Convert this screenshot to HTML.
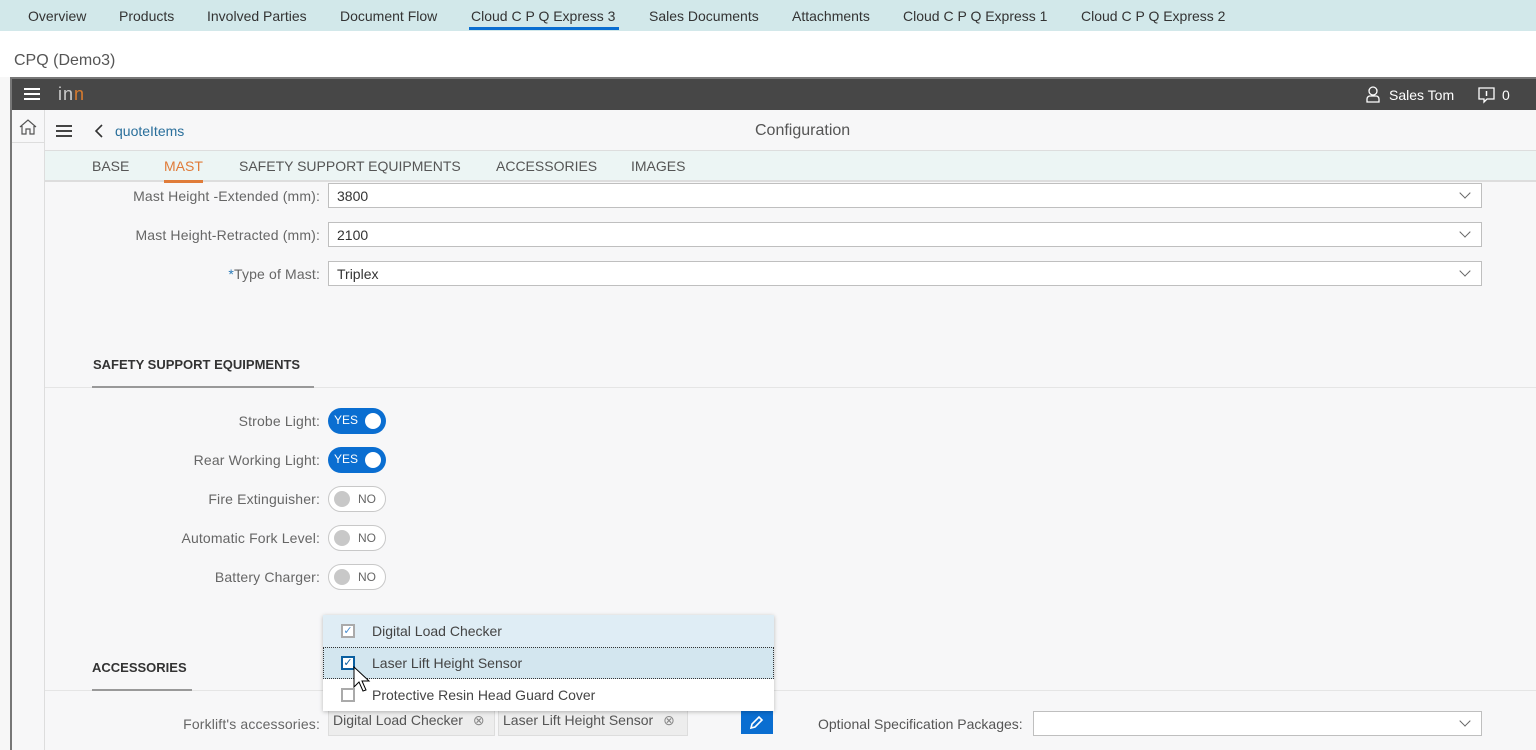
<!DOCTYPE html>
<html><head><meta charset="utf-8"><style>
*{box-sizing:border-box;margin:0;padding:0}
body{width:1536px;height:750px;overflow:hidden;background:#f7f7f7;font-family:"Liberation Sans",Arial,sans-serif;position:relative;color:#333}
.a{position:absolute;white-space:nowrap}
.toptabs{left:0;top:0;width:1536px;height:31px;background:#d2e8ea}
.tt{top:8px;font-size:14px;color:#333}
.lbl{font-size:14px;color:#666;text-align:right;right:1216px;letter-spacing:0.15px}
.inp{left:328px;width:1154px;height:25px;background:#fff;border:1px solid #bfbfbf;font-size:14px;color:#333;padding:4px 8px}
.chev{position:absolute;right:12px;top:5px;width:8px;height:8px;border-right:1px solid #666;border-bottom:1px solid #666;transform:rotate(45deg)}
.yes{left:328px;width:58px;height:26px;border-radius:13px;background:#0a6ed1;color:#fff;font-size:12px;padding:5px 0 0 6px}
.yes::after{content:"";position:absolute;right:5px;top:5px;width:16px;height:16px;border-radius:50%;background:#fff}
.no{left:328px;width:58px;height:26px;border-radius:13px;background:#fff;border:1px solid #c8c8c8;color:#666;font-size:12px;padding:5px 0 0 29px}
.no::before{content:"";position:absolute;left:5px;top:4px;width:16px;height:16px;border-radius:50%;background:#c8c8c8}
.cb{width:14px;height:14px;border:2px solid #aaa;background:#fff;font-size:11px;color:#4a8fd0;line-height:10px;text-align:center}
.tok{top:708px;height:28px;background:#ededed;border:1px solid #ddd;font-size:14px;color:#555;padding:3px 4px}
</style></head><body>
<div class="a toptabs"></div>
<div class="a tt" style="left:28px">Overview</div>
<div class="a tt" style="left:119px">Products</div>
<div class="a tt" style="left:207px">Involved Parties</div>
<div class="a tt" style="left:340px">Document Flow</div>
<div class="a tt" style="left:471px">Cloud C P Q Express 3</div>
<div class="a" style="left:469px;top:27px;width:150px;height:3px;background:#0a6ed1"></div>
<div class="a tt" style="left:649px">Sales Documents</div>
<div class="a tt" style="left:792px">Attachments</div>
<div class="a tt" style="left:903px">Cloud C P Q Express 1</div>
<div class="a tt" style="left:1081px">Cloud C P Q Express 2</div>
<div class="a" style="left:0;top:31px;width:1536px;height:46px;background:#fff"></div>
<div class="a" style="left:14px;top:52px;font-size:16px;color:#555">CPQ (Demo3)</div>
<div class="a" style="left:10px;top:77px;width:1526px;height:673px;border:2px solid #777;border-right:none;border-bottom:none;background:#f7f7f8"></div>
<div class="a" style="left:12px;top:79px;width:1524px;height:31px;background:#474747"></div>
<div class="a" style="left:24px;top:88px;width:16px;height:2px;background:#fff;box-shadow:0 5px 0 #fff,0 10px 0 #fff"></div>
<div class="a" style="left:58px;top:84px;font-size:18px;color:#ccc;letter-spacing:1px">in<span style="color:#d87b2e">n</span></div>
<svg class="a" style="left:1366px;top:86px" width="14" height="17" viewBox="0 0 14 17"><circle cx="7" cy="5" r="4" fill="none" stroke="#fff" stroke-width="1.3"/><path d="M1 16v-3a3 3 0 0 1 3-3h6a3 3 0 0 1 3 3v3z" fill="none" stroke="#fff" stroke-width="1.3"/></svg>
<div class="a" style="left:1389px;top:87px;font-size:14px;color:#fff">Sales Tom</div>
<svg class="a" style="left:1478px;top:87px" width="18" height="17" viewBox="0 0 18 17"><path d="M1 1h15v11H9l-3 3v-3H1z" fill="none" stroke="#fff" stroke-width="1.3"/><path d="M8.5 4v5" stroke="#fff" stroke-width="1.5"/></svg>
<div class="a" style="left:1502px;top:87px;font-size:14px;color:#fff">0</div>
<div class="a" style="left:44px;top:110px;width:1px;height:640px;background:#ddd"></div>
<div class="a" style="left:12px;top:142px;width:32px;height:1px;background:#ddd"></div>
<svg class="a" style="left:19px;top:118px" width="18" height="17" viewBox="0 0 18 17"><path d="M1 9L9 2l8 7M3 8v8h4v-5h4v5h4V8" fill="none" stroke="#555" stroke-width="1.2"/></svg>
<div class="a" style="left:45px;top:110px;width:1491px;height:41px;background:#f7f7f8;border-bottom:1px solid #ddd"></div>
<div class="a" style="left:56px;top:125px;width:16px;height:2px;background:#444;box-shadow:0 5px 0 #444,0 10px 0 #444"></div>
<svg class="a" style="left:94px;top:124px" width="10" height="14" viewBox="0 0 10 14"><path d="M8 1L2 7l6 6" fill="none" stroke="#333" stroke-width="1.6"/></svg>
<div class="a" style="left:115px;top:123px;font-size:14px;color:#2a6f9b">quoteItems</div>
<div class="a" style="left:755px;top:122px;font-size:16px;color:#555">Configuration</div>
<div class="a" style="left:45px;top:151px;width:1491px;height:31px;background:#ecf5f4;border-bottom:2px solid #ddd"></div>
<div class="a" style="left:92px;top:158px;font-size:14px;color:#555">BASE</div>
<div class="a" style="left:164px;top:158px;font-size:14px;color:#e07b39">MAST</div>
<div class="a" style="left:164px;top:180px;width:39px;height:3px;background:#e07b39"></div>
<div class="a" style="left:239px;top:158px;font-size:14px;color:#555">SAFETY SUPPORT EQUIPMENTS</div>
<div class="a" style="left:496px;top:158px;font-size:14px;color:#555">ACCESSORIES</div>
<div class="a" style="left:631px;top:158px;font-size:14px;color:#555">IMAGES</div>

<div class="a lbl" style="top:188px">Mast Height -Extended (mm):</div>
<div class="a inp" style="top:183px">3800<span class="chev"></span></div>
<div class="a lbl" style="top:227px">Mast Height-Retracted (mm):</div>
<div class="a inp" style="top:222px">2100<span class="chev"></span></div>
<div class="a lbl" style="top:266px"><span style="color:#2a7ab8">*</span>Type of Mast:</div>
<div class="a inp" style="top:261px">Triplex<span class="chev"></span></div>

<div class="a" style="left:93px;top:357px;font-size:13px;font-weight:bold;color:#333">SAFETY SUPPORT EQUIPMENTS</div>
<div class="a" style="left:45px;top:387px;width:1491px;height:1px;background:#e5e5e5"></div>
<div class="a" style="left:92px;top:386px;width:222px;height:2px;background:#999"></div>
<div class="a lbl" style="top:413px">Strobe Light:</div><div class="a yes" style="top:408px">YES</div>
<div class="a lbl" style="top:452px">Rear Working Light:</div><div class="a yes" style="top:447px">YES</div>
<div class="a lbl" style="top:491px">Fire Extinguisher:</div><div class="a no" style="top:486px">NO</div>
<div class="a lbl" style="top:530px">Automatic Fork Level:</div><div class="a no" style="top:525px">NO</div>
<div class="a lbl" style="top:569px">Battery Charger:</div><div class="a no" style="top:564px">NO</div>

<div class="a" style="left:92px;top:660px;font-size:13px;font-weight:bold;color:#333">ACCESSORIES</div>
<div class="a" style="left:45px;top:690px;width:1491px;height:1px;background:#e5e5e5"></div>
<div class="a" style="left:92px;top:689px;width:100px;height:2px;background:#999"></div>
<div class="a lbl" style="top:716px">Forklift's accessories:</div>
<div class="a tok" style="left:328px;width:167px">Digital Load Checker <span style="margin-left:6px;color:#888">⊗</span></div>
<div class="a tok" style="left:498px;width:190px">Laser Lift Height Sensor <span style="margin-left:6px;color:#888">⊗</span></div>
<div class="a" style="left:741px;top:710px;width:32px;height:24px;background:#0a6ed1"></div>
<svg class="a" style="left:749px;top:715px" width="15" height="15" viewBox="0 0 15 15"><path d="M2 13l1-4 7-7 3 3-7 7z" fill="none" stroke="#fff" stroke-width="1.6"/></svg>
<div class="a" style="left:818px;top:716px;font-size:14px;color:#555">Optional Specification Packages:</div>
<div class="a inp" style="left:1033px;width:449px;top:711px"><span class="chev"></span></div>

<div class="a" style="left:323px;top:615px;width:451px;height:96px;background:#fff;box-shadow:0 1px 4px rgba(0,0,0,.25)"></div>
<div class="a" style="left:323px;top:615px;width:451px;height:32px;background:#dfedf5"></div>
<div class="a" style="left:323px;top:647px;width:451px;height:32px;background:#d3e6ef;border:1px dotted #333"></div>
<div class="a cb" style="left:341px;top:624px">✓</div>
<div class="a" style="left:372px;top:623px;font-size:14px;color:#444">Digital Load Checker</div>
<div class="a cb" style="left:341px;top:656px;border-color:#0a5fa0;color:#0a5fa0">✓</div>
<div class="a" style="left:372px;top:655px;font-size:14px;color:#444">Laser Lift Height Sensor</div>
<div class="a cb" style="left:341px;top:688px"></div>
<div class="a" style="left:372px;top:687px;font-size:14px;color:#444">Protective Resin Head Guard Cover</div>
<svg class="a" style="left:353px;top:666px" width="18" height="28" viewBox="0 0 18 28"><path d="M1 1v20l5-5 4 9 3-1-4-9h7z" fill="#fff" stroke="#000" stroke-width="1"/></svg>
</body></html>
